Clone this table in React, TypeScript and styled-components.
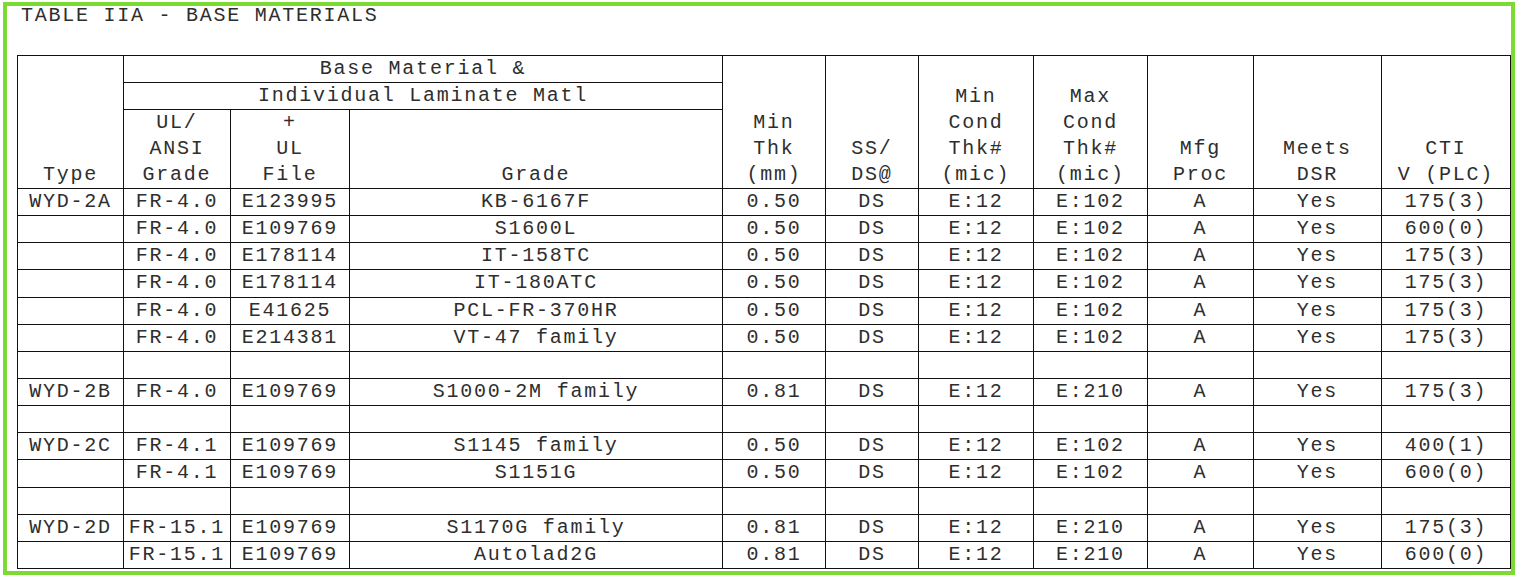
import React from "react";
import styled, { createGlobalStyle } from "styled-components";

type Row = string[];

const GlobalStyle = createGlobalStyle`
  html, body {
    margin: 0;
    padding: 0;
    background: #ffffff;
  }
  body {
    font-family: "Liberation Mono", "Courier New", monospace;
    color: #2e2e2e;
  }
`;

const columnWidths = [106, 107, 119, 373, 103, 93, 115, 114, 106, 128, 129];

const rows: Row[] = [
  ["WYD-2A", "FR-4.0", "E123995", "KB-6167F", "0.50", "DS", "E:12", "E:102", "A", "Yes", "175(3)"],
  ["", "FR-4.0", "E109769", "S1600L", "0.50", "DS", "E:12", "E:102", "A", "Yes", "600(0)"],
  ["", "FR-4.0", "E178114", "IT-158TC", "0.50", "DS", "E:12", "E:102", "A", "Yes", "175(3)"],
  ["", "FR-4.0", "E178114", "IT-180ATC", "0.50", "DS", "E:12", "E:102", "A", "Yes", "175(3)"],
  ["", "FR-4.0", "E41625", "PCL-FR-370HR", "0.50", "DS", "E:12", "E:102", "A", "Yes", "175(3)"],
  ["", "FR-4.0", "E214381", "VT-47 family", "0.50", "DS", "E:12", "E:102", "A", "Yes", "175(3)"],
  [],
  ["WYD-2B", "FR-4.0", "E109769", "S1000-2M family", "0.81", "DS", "E:12", "E:210", "A", "Yes", "175(3)"],
  [],
  ["WYD-2C", "FR-4.1", "E109769", "S1145 family", "0.50", "DS", "E:12", "E:102", "A", "Yes", "400(1)"],
  ["", "FR-4.1", "E109769", "S1151G", "0.50", "DS", "E:12", "E:102", "A", "Yes", "600(0)"],
  [],
  ["WYD-2D", "FR-15.1", "E109769", "S1170G family", "0.81", "DS", "E:12", "E:210", "A", "Yes", "175(3)"],
  ["", "FR-15.1", "E109769", "Autolad2G", "0.81", "DS", "E:12", "E:210", "A", "Yes", "600(0)"],
];

// header cells that span all three header rows, text sits at the bottom
const tallHeads: string[][] = [
  ["Min", "Thk", "(mm)"],
  ["SS/", "DS@"],
  ["Min", "Cond", "Thk#", "(mic)"],
  ["Max", "Cond", "Thk#", "(mic)"],
  ["Mfg", "Proc"],
  ["Meets", "DSR"],
  ["CTI", "V (PLC)"],
];

const App = () => {
  return (
    <>
      <GlobalStyle />
      <Frame>
        <Title>TABLE IIA - BASE MATERIALS</Title>
        <Table>
          <colgroup>
            {columnWidths.map((w, i) => (
              <col key={i} style={{ width: w }} />
            ))}
          </colgroup>
          <thead>
            <HeadRow>
              <HeadCell rowSpan={3}>Type</HeadCell>
              <HeadCell colSpan={3}>Base Material &amp;</HeadCell>
              {tallHeads.map((lines, i) => (
                <HeadCell key={i} rowSpan={3}>
                  {lines.map((l, j) => (
                    <Line key={j}>{l}</Line>
                  ))}
                </HeadCell>
              ))}
            </HeadRow>
            <HeadRow>
              <HeadCell colSpan={3}>Individual Laminate Matl</HeadCell>
            </HeadRow>
            <HeadRow $tall>
              <HeadCell>
                <Line>UL/</Line>
                <Line>ANSI</Line>
                <Line>Grade</Line>
              </HeadCell>
              <HeadCell>
                <Line>+</Line>
                <Line>UL</Line>
                <Line>File</Line>
              </HeadCell>
              <HeadCell>
                <Line>Grade</Line>
              </HeadCell>
            </HeadRow>
          </thead>
          <tbody>
            {rows.map((row, i) => (
              <DataRow key={i}>
                {columnWidths.map((_, c) => (
                  <Cell key={c}>{row[c] ?? ""}</Cell>
                ))}
              </DataRow>
            ))}
          </tbody>
        </Table>
      </Frame>
    </>
  );
};

export default App;

const Frame = styled.div`
  margin: 2px 0 0 3px;
  width: 1504px;
  height: 565px;
  border: 4px solid #7bdb33;
  background: #ffffff;
`;

const Title = styled.div`
  padding-left: 14px;
  height: 20px;
  line-height: 20px;
  font-size: 20px;
  letter-spacing: 1.75px;
  white-space: pre;
`;

const Table = styled.table`
  margin: 29px 0 0 10px;
  width: 1494px;
  table-layout: fixed;
  border-collapse: collapse;
  font-size: 20px;
  letter-spacing: 1.75px;
`;

const HeadRow = styled.tr<{ $tall?: boolean }>`
  height: ${(p) => (p.$tall ? "78px" : "27px")};
`;

const HeadCell = styled.th`
  border: 1px solid #111111;
  padding: 0;
  font-weight: normal;
  text-align: center;
  vertical-align: bottom;
  line-height: 26px;
  white-space: pre;
`;

const Line = styled.div`
  height: 26px;
`;

const DataRow = styled.tr`
  height: 27.15px;
`;

const Cell = styled.td`
  border: 1px solid #111111;
  padding: 0;
  text-align: center;
  vertical-align: middle;
  line-height: 24px;
  white-space: pre;
`;
